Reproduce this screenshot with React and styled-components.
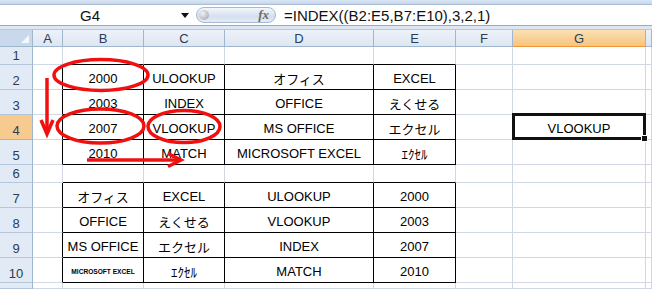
import React from 'react'
import styled, { createGlobalStyle, css } from 'styled-components'

const GlobalStyle = createGlobalStyle`
  html, body {
    margin: 0;
    padding: 0;
    background: #fff;
    overflow: hidden;
  }
  body {
    font-family: "Liberation Sans", "Noto Sans CJK JP", sans-serif;
  }
`

const GRID = '#d0d7e5'
const HEAD_LINE = '#9eb6ce'

const Window = styled.div`
  position: relative;
  width: 652px;
  height: 289px;
  overflow: hidden;
  background: #fff;
`

const TopStrip = styled.div`
  height: 5px;
  background: linear-gradient(#dbe6f4, #c4d5eb);
  border-bottom: 1px solid #a9bdd6;
  box-sizing: border-box;
`

const FormulaBar = styled.div`
  display: flex;
  align-items: center;
  height: 21px;
  border-bottom: 1px solid #9aaabf;
  box-sizing: border-box;
  background: #fff;
`

const NameBox = styled.div`
  width: 180px;
  text-align: center;
  font-size: 15px;
  color: #111;
`

const DropArrow = styled.div`
  width: 0;
  height: 0;
  margin-left: 1px;
  border-left: 4px solid transparent;
  border-right: 4px solid transparent;
  border-top: 5px solid #111;
`

const FxButton = styled.div`
  position: relative;
  display: flex;
  align-items: center;
  justify-content: flex-end;
  margin-left: 7px;
  width: 80px;
  height: 16px;
  box-sizing: border-box;
  padding-right: 6px;
  border: 1px solid #a6b8d2;
  border-radius: 9px;
  background: linear-gradient(#f4f7fc, #d4e0ef 60%, #e4ecf6);
  font-family: "Liberation Serif", serif;
  font-style: italic;
  font-weight: bold;
  font-size: 13px;
  color: #6a6a6a;

  &::before {
    content: '';
    position: absolute;
    left: 2px;
    top: 2px;
    width: 10px;
    height: 10px;
    border-radius: 50%;
    background: radial-gradient(circle at 35% 35%, #f2f2f2, #9a9fa8);
  }
`

const FormulaText = styled.div`
  margin-left: 8px;
  padding-left: 0;
  font-size: 15px;
  color: #111;
  white-space: nowrap;
`

const Separator = styled.div`
  height: 4px;
  background: #dde7f3;
  border-bottom: 1px solid #b8c8dc;
  box-sizing: border-box;
`

const Sheet = styled.div`
  display: grid;
  grid-template-columns: 33px 30px 81px 81px 149px 82px 57px 133px 1fr;
  grid-template-rows: 17px 18px 25px 25px 25px 25px 18px 25px 25px 25px 25px 1fr;
  height: 259px;
`

const headBg = css`
  background: linear-gradient(#eef2f8, #dde6f1);
  color: #2a3c58;
`
const activeBg = css`
  background: linear-gradient(#fbe0b2, #f6c47f);
  color: #2a3c58;
`

const Corner = styled.div`
  position: relative;
  ${headBg};
  background: #c9d8eb;
  border-right: 1px solid ${HEAD_LINE};
  border-bottom: 1px solid ${HEAD_LINE};
  box-sizing: border-box;

  &::after {
    content: '';
    position: absolute;
    right: 3px;
    bottom: 3px;
    border-left: 8px solid transparent;
    border-bottom: 8px solid #f4f7fb;
  }
`

const ColHead = styled.div`
  ${({ $active }) => ($active ? activeBg : headBg)};
  display: flex;
  align-items: center;
  justify-content: center;
  font-size: 13px;
  border-right: 1px solid ${({ $active }) => ($active ? '#f0a646' : HEAD_LINE)};
  border-bottom: 1px solid ${({ $active }) => ($active ? '#f29436' : HEAD_LINE)};
  box-sizing: border-box;
  overflow: hidden;
`

const RowHead = styled.div`
  ${({ $active }) => ($active ? activeBg : headBg)};
  background: ${({ $active }) => ($active ? '#f7cb90' : '#e2eaf5')};
  display: flex;
  align-items: flex-end;
  justify-content: center;
  padding-bottom: 1px;
  font-size: 13px;
  border-right: 1px solid ${HEAD_LINE};
  border-bottom: 1px solid ${({ $active }) => ($active ? '#f0a646' : '#b4c6dc')};
  box-sizing: border-box;
  overflow: hidden;
`

const Cell = styled.div`
  position: relative;
  display: flex;
  align-items: center;
  justify-content: center;
  padding-top: 2px;
  box-sizing: border-box;
  font-size: ${({ $tiny }) => ($tiny ? '6.6px' : '13px')};
  font-weight: ${({ $tiny }) => ($tiny ? 'bold' : 'normal')};
  color: #000;
  white-space: nowrap;
  overflow: visible;
  border-right: 1px solid ${({ $rb }) => ($rb ? '#000' : GRID)};
  border-bottom: 1px solid ${({ $bb }) => ($bb ? '#000' : GRID)};

  ${({ $active }) =>
    $active &&
    css`
      &::after {
        content: '';
        position: absolute;
        left: -1px;
        top: -2px;
        right: -1px;
        bottom: -1px;
        border: 3px solid #111;
      }
      &::before {
        content: '';
        position: absolute;
        right: -3px;
        bottom: -3px;
        width: 5px;
        height: 5px;
        background: #111;
        border: 1px solid #fff;
        z-index: 1;
      }
    `}
`

const Overlay = styled.svg`
  position: absolute;
  left: 0;
  top: 0;
  pointer-events: none;
`

const COLS = ['A', 'B', 'C', 'D', 'E', 'F', 'G', '']

const DATA = {
  2: ['2000', 'ULOOKUP', 'オフィス', 'EXCEL'],
  3: ['2003', 'INDEX', 'OFFICE', 'えくせる'],
  4: ['2007', 'VLOOKUP', 'MS OFFICE', 'エクセル'],
  5: ['2010', 'MATCH', 'MICROSOFT EXCEL', 'ｴｸｾﾙ'],
  7: ['オフィス', 'EXCEL', 'ULOOKUP', '2000'],
  8: ['OFFICE', 'えくせる', 'VLOOKUP', '2003'],
  9: ['MS OFFICE', 'エクセル', 'INDEX', '2007'],
  10: ['MICROSOFT EXCEL', 'ｴｸｾﾙ', 'MATCH', '2010'],
}

const ROWS = [1, 2, 3, 4, 5, 6, 7, 8, 9, 10, 11]

function renderRow(r) {
  const inTableRow = !!DATA[r]
  const aboveTable = r === 1 || r === 6
  const cells = COLS.map((_, c) => {
    const inTable = inTableRow && c >= 1 && c <= 4
    const rb = inTable || (inTableRow && c === 0)
    const bb = inTable || (aboveTable && c >= 1 && c <= 4)
    let value = inTable ? DATA[r][c - 1] : ''
    const active = r === 4 && c === 6
    if (active) value = 'VLOOKUP'
    const tiny = r === 10 && c === 1
    return (
      <Cell key={c} $rb={rb} $bb={bb} $active={active} $tiny={tiny}>
        {value}
      </Cell>
    )
  })
  return [
    <RowHead key={'h' + r} $active={r === 4}>
      {r === 11 ? '' : r}
    </RowHead>,
    ...cells,
  ]
}

export default function App() {
  return (
    <>
      <GlobalStyle />
      <Window>
        <TopStrip />
        <FormulaBar>
          <NameBox>G4</NameBox>
          <DropArrow />
          <FxButton>fx</FxButton>
          <FormulaText>=INDEX((B2:E5,B7:E10),3,2,1)</FormulaText>
        </FormulaBar>
        <Separator />
        <Sheet>
          <Corner />
          {COLS.map((name, i) => (
            <ColHead key={i} $active={name === 'G'}>
              {name}
            </ColHead>
          ))}
          {ROWS.map(renderRow)}
        </Sheet>

        <Overlay width="652" height="289" viewBox="0 0 652 289">
          <g fill="none" stroke="#f01010" strokeWidth="3.5">
            <ellipse cx="101" cy="75" rx="47" ry="15.5" />
            <ellipse cx="100.5" cy="126" rx="43.5" ry="17" />
            <ellipse cx="184" cy="126.5" rx="36" ry="16" />
            <line x1="47" y1="78" x2="47" y2="133" />
            <polyline points="41,120 47,134 53,120" />
            <line x1="87" y1="160" x2="180" y2="160" />
            <polyline points="168,153.5 181,160 168,166.5" />
          </g>
        </Overlay>
      </Window>
    </>
  )
}
